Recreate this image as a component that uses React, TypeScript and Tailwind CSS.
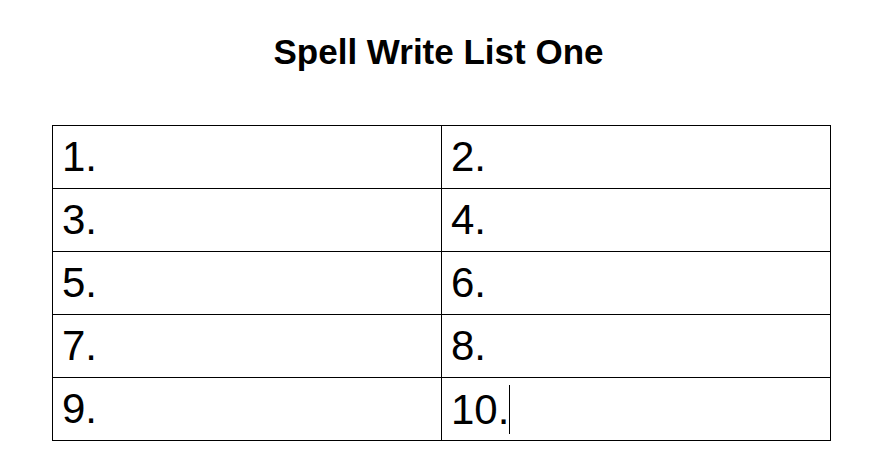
const rows = [
  ['1.', '2.'],
  ['3.', '4.'],
  ['5.', '6.'],
  ['7.', '8.'],
  ['9.', '10.'],
]

export default function App() {
  return (
    <div className="min-h-[475px] w-[877px] bg-white text-black font-['Liberation_Sans',Arial,sans-serif]">
      <h1 className="pt-[32px] text-center text-[35px] font-bold leading-[39px]">Spell Write List One</h1>
      <table className="ml-[52px] mt-[54px] w-[779px] table-fixed border-collapse">
        <tbody>
          {rows.map((row, i) => (
            <tr key={i}>
              {row.map((cell, j) => (
                <td
                  key={j}
                  className="h-[63px] border border-black pl-[9px] pt-[7px] align-top text-[42px] leading-[47px]"
                >
                  {cell}
                  {cell === '10.' && (
                    <span className="inline-block h-[49px] w-px bg-black align-[-10px]" />
                  )}
                </td>
              ))}
            </tr>
          ))}
        </tbody>
      </table>
    </div>
  )
}
